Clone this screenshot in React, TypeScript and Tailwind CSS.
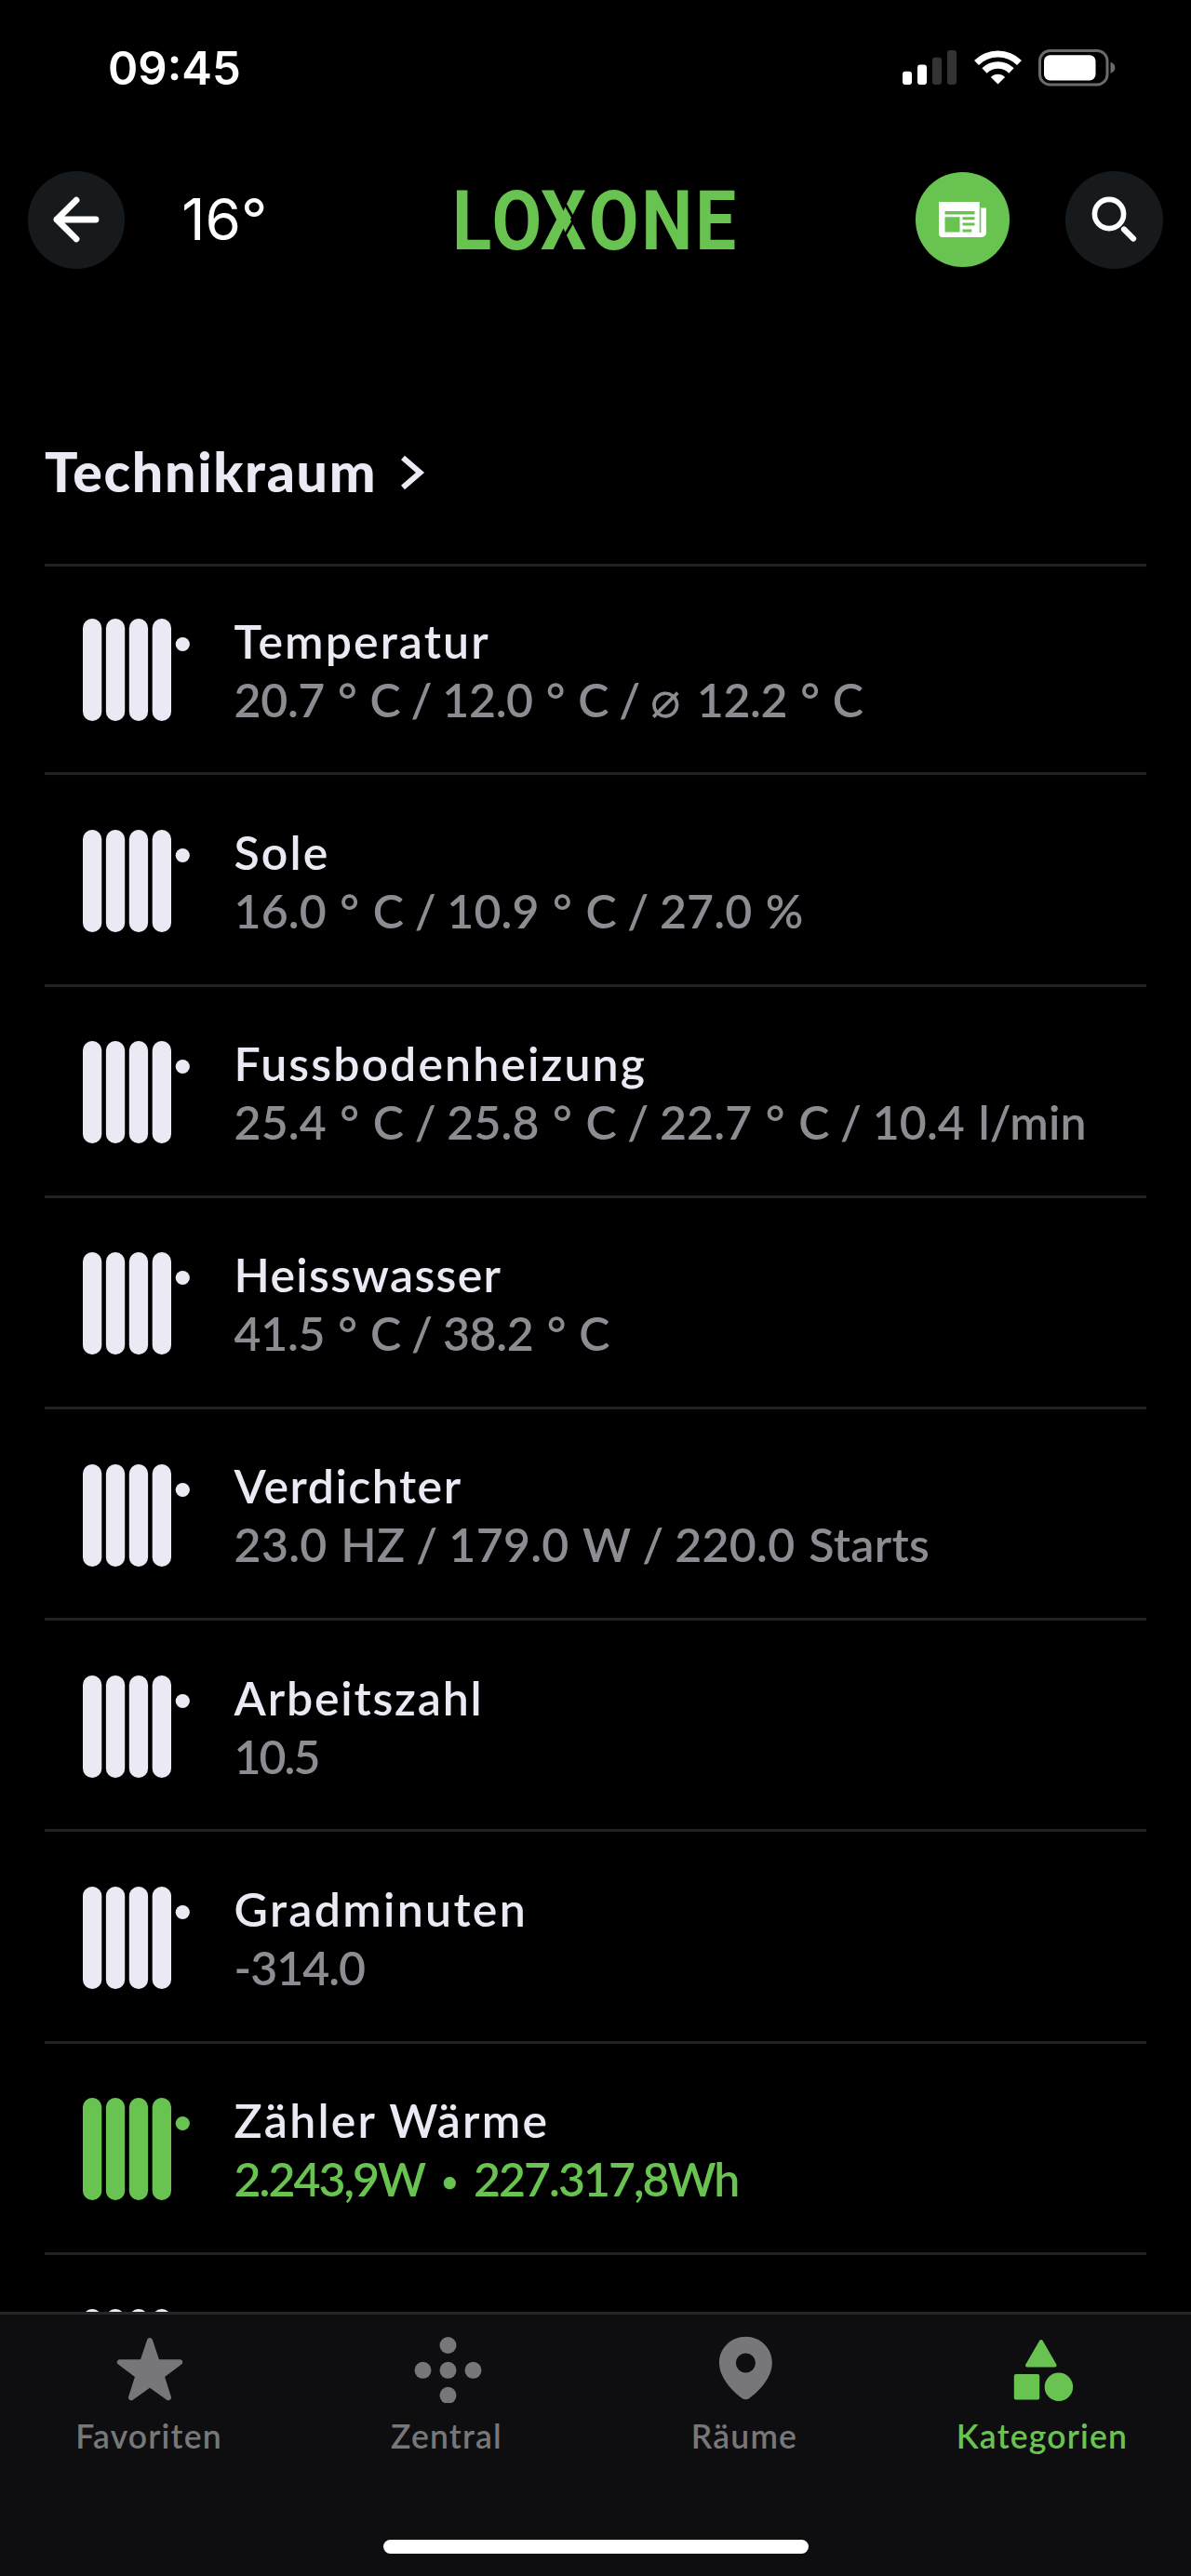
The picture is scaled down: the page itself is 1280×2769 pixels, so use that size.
import { Fragment } from 'react'
import clsx from 'clsx'

type Item = {
  name: string
  value: string
  active?: boolean
  nameClass?: string
  valueClass?: string
}

const items: Item[] = [
  { name: 'Temperatur', value: '20.7 ° C / 12.0 ° C / ⌀ 12.2 ° C', valueClass: 'tracking-[-0.35px]' },
  { name: 'Sole', value: '16.0 ° C / 10.9 ° C / 27.0 %', valueClass: 'tracking-[0.1px]' },
  { name: 'Fussbodenheizung', value: '25.4 ° C / 25.8 ° C / 22.7 ° C / 10.4 l/min', valueClass: 'tracking-[0.1px]' },
  { name: 'Heisswasser', value: '41.5 ° C / 38.2 ° C', nameClass: 'tracking-[1.3px]', valueClass: 'tracking-[-0.3px]' },
  { name: 'Verdichter', value: '23.0 HZ / 179.0 W / 220.0 Starts', nameClass: 'tracking-[1.5px]', valueClass: 'tracking-[0.3px]' },
  { name: 'Arbeitszahl', value: '10.5', nameClass: 'tracking-[1.8px]', valueClass: 'tracking-[-2px]' },
  { name: 'Gradminuten', value: '-314.0', nameClass: 'tracking-[2.3px]', valueClass: 'tracking-[-1px]' },
  { name: 'Zähler Wärme', value: '2.243,9W • 227.317,8Wh', active: true, nameClass: 'tracking-[2.2px]', valueClass: 'tracking-[-2px]' },
  { name: '', value: '' },
]

function StatusBar() {
  return (
    <div className="flex h-[145px] shrink-0 items-center justify-between pl-[116px] pr-[80px]">
      <span className="pt-[2px] font-['Inter'] text-[49px] leading-[60px] font-semibold text-white">09:45</span>
      <div className="flex items-center">
        <svg width="58" height="37" viewBox="0 0 58 37">
          <rect x="0" y="22.7" width="10" height="14.3" rx="3" fill="#fff" />
          <rect x="16" y="15.5" width="10" height="21.5" rx="3" fill="#fff" />
          <rect x="32" y="7.7" width="10" height="29.3" rx="3" fill="#333" />
          <rect x="48" y="0" width="10" height="37" rx="3" fill="#333" />
        </svg>
        <svg className="ml-[19px]" width="51" height="37" viewBox="0 0 51 37">
          <path d="M2.5 13.5a32.5 32.5 0 0 1 46 0" fill="none" stroke="#fff" strokeWidth="7" />
          <path d="M11 22a20.5 20.5 0 0 1 29 0" fill="none" stroke="#fff" strokeWidth="7.5" />
          <path d="M25.5 36.5l-7.6-7.6a10.8 10.8 0 0 1 15.2 0z" fill="#fff" />
        </svg>
        <svg className="ml-[18px]" width="84" height="40" viewBox="0 0 84 40">
          <rect x="1.5" y="1.5" width="72.5" height="36.5" rx="11" fill="none" stroke="#6b6b6b" strokeWidth="3" />
          <rect x="6" y="6.2" width="55.5" height="27.2" rx="6.5" fill="#fff" />
          <path d="M77.5 13.7q4.8 1.4 4.8 6t-4.8 6z" fill="#6b6b6b" />
        </svg>
      </div>
    </div>
  )
}

function Logo() {
  return (
    <svg className="mb-px overflow-visible" width="300" height="64" viewBox="0 0 300 64">
      <text
        transform="scale(.87 1)"
        x="-4.6 44.4 104.2 164.2 229 295.6"
        y="64"
        className="fill-[#69c350] font-['Roboto'] text-[89.6px] font-bold"
      >
        LOXONE
      </text>
      <path d="M116 13l11 19-11 19" fill="none" stroke="#000" strokeWidth="3" />
    </svg>
  )
}

function Header() {
  return (
    <header className="flex h-[182px] shrink-0 items-center pl-[29.5px] pr-[30px]">
      <button className="flex size-[105px] items-center justify-center rounded-full bg-[#171a1c]">
        <svg width="50" height="50" viewBox="0 0 50 50" fill="none" stroke="#fff" strokeWidth="6.8" strokeLinecap="round" strokeLinejoin="round">
          <path d="M46 25H4M25 4.2L4 25l21 20.8" />
        </svg>
      </button>
      <span className="ml-[61px] w-[295px] font-['Inter'] text-[62px] leading-[72px] text-white">16°</span>
      <Logo />
      <button className="ml-[194px] flex size-[102px] items-center justify-center rounded-full bg-[#69c350]">
        <svg width="51" height="38" viewBox="0 0 51 38">
          <path d="M0 0h43.7v6.5H51V33a5 5 0 0 1-5 5H4a4 4 0 0 1-4-4z" fill="#fff" />
          <path d="M6.5 10h32v3.4h-32zM6.5 16.3h16v16.3h-16zM25.5 16.3h13v3h-13zM25.5 22.6h13v3h-13zM25.5 29.4h9.8v3h-9.8zM43.7 6.5h1.6v26.5h-1.6z" fill="#69c350" />
        </svg>
      </button>
      <button className="ml-[60px] flex size-[105px] items-center justify-center rounded-full bg-[#171a1c]">
        <svg width="50" height="50" viewBox="0 0 50 50" fill="none" stroke="#fff">
          <circle cx="19" cy="19" r="15.6" strokeWidth="5.6" />
          <path d="M35 35.5L45 45.5" strokeWidth="6.2" strokeLinecap="round" />
        </svg>
      </button>
    </header>
  )
}

function Radiator() {
  return (
    <svg className="mt-[7.2px] shrink-0" width="116" height="110" viewBox="0 0 116 110" fill="currentColor">
      <rect x="0" width="20.3" height="110" rx="10" />
      <rect x="24.9" width="20.3" height="110" rx="10" />
      <rect x="49.8" width="20.3" height="110" rx="10" />
      <rect x="74.7" width="20.3" height="110" rx="10" />
      <circle cx="107.3" cy="27.5" r="7.6" />
    </svg>
  )
}

// separators and the diameter sign get their own size and spacing
function Value({ text }: { text: string }) {
  return text.split(/( \/ |⌀|•)/).map((part, i) => {
    if (part === ' / ') return <span key={i} className="-mx-px [word-spacing:0]">{part}</span>
    if (part === '⌀') return <span key={i} className="mr-[3px] font-['DejaVu_Sans'] text-[54px] leading-none font-extralight">{part}</span>
    if (part === '•') return <span key={i} className="mx-[6px] align-[4px] text-[32px] leading-none">{part}</span>
    return <Fragment key={i}>{part}</Fragment>
  })
}

function Row({ item, first }: { item: Item; first: boolean }) {
  return (
    <li
      className={clsx(
        'flex h-[227.2px] shrink-0 items-start border-b-[3px] border-[#212122] pl-[40.6px]',
        first ? 'border-t-[3px] pt-[48.4px]' : 'pt-[51.4px]'
      )}
    >
      <div className={item.active ? 'text-[#69c350]' : 'text-[#ebeaf4]'}>
        <Radiator />
      </div>
      <div className="ml-[47px] text-[50px] leading-[63px] font-semibold whitespace-nowrap">
        <div className={clsx('h-[63px] text-[#ebeaf4]', item.nameClass ?? 'tracking-[2.1px]')}>{item.name}</div>
        <div className={clsx('h-[63px] [word-spacing:2px]', item.active ? 'text-[#69c350]' : 'text-[#8d8c93]', item.valueClass)}>
          <Value text={item.value} />
        </div>
      </div>
    </li>
  )
}

const tabs = [
  {
    label: 'Favoriten',
    icon: (
      <path
        d="M37 5l7.8 23.2h24.4L49.6 42.8l7.4 23.4L37 52 17 66.2l7.4-23.4L4.8 28.2h24.4z"
        stroke="currentColor"
        strokeWidth="6"
        strokeLinejoin="round"
      />
    ),
  },
  {
    label: 'Zentral',
    icon: (
      <>
        <circle cx="37.5" cy="10" r="9" />
        <circle cx="10.5" cy="36.8" r="9" />
        <circle cx="37.5" cy="36.8" r="9" />
        <circle cx="64.5" cy="36.8" r="9" />
        <circle cx="37.5" cy="63.8" r="9" />
      </>
    ),
  },
  {
    label: 'Räume',
    icon: (
      <path
        fillRule="evenodd"
        d="M37.4.8C21.5.8 9 13.2 9 28.8 9 44 22 58.5 33.5 67q3.9 2.4 7.8 0C53 58.5 65.8 44 65.8 28.8 65.8 13.2 53.3.8 37.4.8zM37.4 18.5a10.5 10.5 0 1 1 0 21 10.5 10.5 0 0 1 0-21z"
      />
    ),
  },
  {
    label: 'Kategorien',
    active: true,
    icon: (
      <>
        <path d="M34.9 6l-14.8 25.5h29.5z" stroke="currentColor" strokeWidth="4" strokeLinejoin="round" />
        <rect x="5.8" y="41" width="27.4" height="27.4" rx="2" />
        <circle cx="53.9" cy="54.7" r="15.2" />
      </>
    ),
  },
]

function TabBar() {
  return (
    <nav className="relative grid h-[284px] shrink-0 grid-cols-4 border-t-[3px] border-[#262628] bg-[#0e0e10] pt-[23px]">
      {tabs.map(tab => (
        <div key={tab.label} className={clsx('flex flex-col items-center', tab.active ? 'text-[#69c350]' : 'text-[#77777a]')}>
          <svg className="ml-[2px]" width="74" height="72" viewBox="0 0 74 72" fill="currentColor">
            {tab.icon}
          </svg>
          <span className="mt-[16px] text-[35.5px] leading-[40px] font-semibold tracking-[1.2px]">{tab.label}</span>
        </div>
      ))}
      <div className="absolute bottom-[24px] left-[411.5px] h-[15px] w-[457.5px] rounded-full bg-white" />
    </nav>
  )
}

export default function App() {
  return (
    <div className="flex h-[2769px] w-[1280px] flex-col overflow-hidden bg-black font-['Lato',sans-serif]">
      <StatusBar />
      <Header />
      <main className="flex min-h-0 flex-1 flex-col overflow-hidden px-12 pt-[143.5px]">
        <div className="flex h-[135.8px] shrink-0 items-start text-[#ebeaf4]">
          <h1 className="text-[59px] leading-[72px] font-black tracking-[1.7px]">Technikraum</h1>
          <svg className="mt-[18px] ml-[25px]" width="28" height="38" viewBox="0 0 28 38" fill="none" stroke="currentColor" strokeWidth="6">
            <path d="M3 3l18.5 16L3 35" />
          </svg>
        </div>
        <ul className="flex flex-col">
          {items.map((item, i) => (
            <Row key={i} item={item} first={i === 0} />
          ))}
        </ul>
      </main>
      <TabBar />
    </div>
  )
}
